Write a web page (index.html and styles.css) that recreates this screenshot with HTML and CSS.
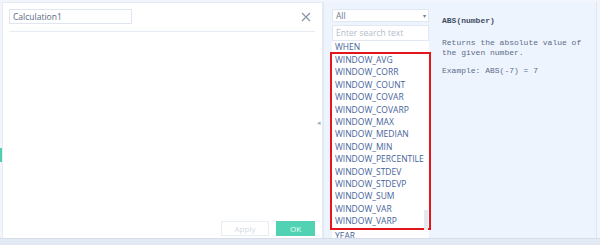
FILE: index.html
```html
<!DOCTYPE html>
<html>
<head>
<meta charset="utf-8">
<link rel="stylesheet" href="styles.css">
</head>
<body>
<div class="app">
  <div class="left">
    <div class="head">
      <div class="name">Calculation1</div>
      <svg class="close" width="10" height="10" viewBox="0 0 10 10"><path d="M1 1L9 9M9 1L1 9" stroke="#8a94a6" stroke-width="1.2" fill="none"/></svg>
    </div>
    <div class="rule"></div>
    <div class="editor"></div>
    <div class="actions">
      <div class="btn apply">Apply</div>
      <div class="btn ok">OK</div>
    </div>
    <div class="toggle">◂</div>
  </div>
  <div class="right">
    <div class="picker">
      <div class="select"><span>All</span><span class="caret">▾</span></div>
      <div class="search">Enter search text</div>
      <div class="list">
        <div class="item first">WHEN</div>
        <div class="hl">
          <div class="item">WINDOW_AVG</div>
          <div class="item">WINDOW_CORR</div>
          <div class="item">WINDOW_COUNT</div>
          <div class="item">WINDOW_COVAR</div>
          <div class="item">WINDOW_COVARP</div>
          <div class="item">WINDOW_MAX</div>
          <div class="item">WINDOW_MEDIAN</div>
          <div class="item">WINDOW_MIN</div>
          <div class="item">WINDOW_PERCENTILE</div>
          <div class="item">WINDOW_STDEV</div>
          <div class="item">WINDOW_STDEVP</div>
          <div class="item">WINDOW_SUM</div>
          <div class="item">WINDOW_VAR</div>
          <div class="item">WINDOW_VARP</div>
        </div>
        <div class="item">YEAR</div>
        <div class="scroll"></div>
      </div>
    </div>
    <div class="desc">
      <div class="sig">ABS(number)</div>
      <div class="txt">Returns the absolute value of<br>the given number.</div>
      <div class="txt">Example: ABS(-7) = 7</div>
    </div>
  </div>
</div>
<div class="marker"></div>
</body>
</html>
```
FILE: styles.css
```css
html, body {
  margin: 0;
  padding: 0;
}
body {
  width: 600px;
  height: 245px;
  background: #e3eaf4;
  font-family: "Open Sans", "Liberation Sans", sans-serif;
  position: relative;
  overflow: hidden;
}
.app {
  display: flex;
  height: 238px;
  background: #f2f6fc;
  border-bottom: 1px solid #d5deea;
  overflow: hidden;
}
.left {
  position: relative;
  width: 321px;
  margin: 2px 0 0 2px;
  background: #fff;
  border: 1px solid #e6ecf5;
  border-bottom: none;
  display: flex;
  flex-direction: column;
  padding: 6px 7px 0 6px;
  box-sizing: border-box;
}
.head {
  display: flex;
  align-items: center;
  justify-content: space-between;
  height: 15px;
}
.name {
  width: 118px;
  height: 13px;
  border: 1px solid #dfe6f0;
  font-size: 8.5px;
  line-height: 13px;
  color: #5a6b85;
  padding-left: 3px;
}
.close {
  margin-right: 4px;
}
.rule {
  height: 1px;
  background: #e6ecf4;
  margin-top: 7px;
}
.editor {
  flex: 1;
}
.actions {
  display: flex;
  justify-content: flex-end;
  gap: 7px;
  margin-bottom: 2px;
}
.btn {
  height: 14px;
  font-size: 8px;
  line-height: 14px;
  text-align: center;
}
.apply {
  width: 46px;
  border: 1px solid #e7edf5;
  color: #d4dbe6;
  height: 13px;
  line-height: 13px;
}
.ok {
  width: 39px;
  background: #51d3b3;
  color: #eafaf5;
  height: 15px;
  line-height: 15px;
}
.toggle {
  position: absolute;
  right: 1px;
  top: 115px;
  font-size: 7px;
  color: #9fb0c8;
}
.right {
  flex: 1;
  display: flex;
  margin-top: 2px;
  padding: 7px 0 0 8px;
  background: #eef4fd;
  border-left: 1px solid #e0e7f1;
  border-right: 1px solid #e0e7f1;
  margin-right: 3px;
  overflow: hidden;
}
.picker {
  width: 97px;
  flex: none;
  display: flex;
  flex-direction: column;
}
.select {
  height: 13px;
  background: #fff;
  border: 1px solid #e1e8f2;
  display: flex;
  justify-content: space-between;
  align-items: center;
  font-size: 8.5px;
  color: #6d7b92;
  padding: 0 2px 0 3px;
}
.caret {
  font-size: 6px;
  color: #6d7b92;
}
.search {
  margin-top: 3px;
  height: 14px;
  background: #fff;
  border: 1px solid #e1e8f2;
  font-size: 8.5px;
  line-height: 14px;
  color: #b3bdcc;
  padding-left: 3px;
}
.list {
  position: relative;
  flex: 1;
  background: #fff;
}
.item {
  height: 12.4px;
  line-height: 12.4px;
  font-size: 8.5px;
  color: #45639a;
  padding-left: 3px;
  white-space: nowrap;
}
.item.first {
  height: 11px;
  line-height: 11px;
}
.hl {
  border: 2px solid #e2161b;
  margin: 0 -2px;
  padding: 0 0 1px 0;
}
.scroll {
  position: absolute;
  right: 1px;
  top: 169px;
  width: 4px;
  height: 20px;
  background: #e3e9f1;
}
.desc {
  padding: 7px 0 0 13px;
  font-family: "Liberation Mono", monospace;
  font-size: 8px;
  color: #5b6d8a;
}
.sig {
  font-weight: bold;
  color: #3f4d63;
  margin-bottom: 13px;
}
.txt {
  line-height: 9.5px;
  margin-bottom: 9px;
}
.marker {
  position: absolute;
  left: 0;
  top: 148px;
  width: 2px;
  height: 14px;
  background: #4fcfb0;
}
```
